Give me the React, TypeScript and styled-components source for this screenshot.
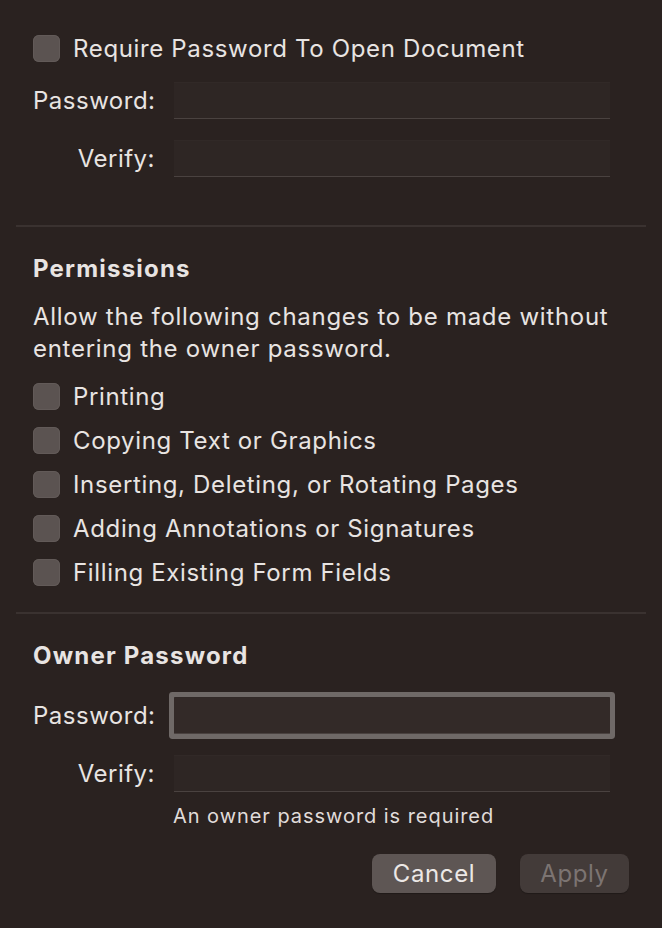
import React from "react";
import styled, { createGlobalStyle } from "styled-components";

const Global = createGlobalStyle`
  html, body { margin: 0; padding: 0; background: #2a2220; }
  body { font-family: Inter, "Noto Sans", sans-serif; color: #e8e4e2; }
  * { box-sizing: border-box; }
`;

const Panel = styled.div`
  width: 662px;
  height: 928px;
  background: #2a2220;
  padding: 0 16px;
  display: flex;
  flex-direction: column;
`;

const Section = styled.div<{ $pt: number; $pb: number }>`
  padding: ${(p) => p.$pt}px 17px ${(p) => p.$pb}px 17px;
  display: flex;
  flex-direction: column;
`;

const Divider = styled.div`
  height: 2px;
  background: #3a3230;
`;

const CheckList = styled.div`
  margin-top: 9px;
  display: flex;
  flex-direction: column;
`;

const CheckRow = styled.label`
  display: flex;
  align-items: center;
  gap: 13px;
  height: 44px;
  font-size: 24px;
  letter-spacing: 0.65px;
  color: #e8e4e2;
`;

const Box = styled.span`
  width: 27px;
  height: 27px;
  border-radius: 6px;
  background: #5b5351;
  box-shadow: inset 0 0 0 1px #625a58;
  flex-shrink: 0;
`;

const FieldRow = styled.div<{ $mt: number }>`
  display: flex;
  align-items: center;
  margin-top: ${(p) => p.$mt}px;
`;

const FieldLabel = styled.span`
  width: 122px;
  text-align: right;
  font-size: 24px;
  letter-spacing: 0.5px;
  color: #e8e4e2;
  margin-right: 19px;
  white-space: nowrap;
`;

const Input = styled.div<{ $focused?: boolean }>`
  width: 436px;
  height: 37px;
  background: ${(p) => (p.$focused ? "#332a28" : "#2e2624")};
  border-bottom: 1px solid #4a4240;
  border-top: 1px solid #312927;
  ${(p) =>
    p.$focused
      ? `box-shadow: 0 0 0 5px #6f6967; border-radius: 1px;`
      : ""}
`;

const Heading = styled.div`
  font-size: 24px;
  font-weight: 700;
  letter-spacing: 1.2px;
  color: #e8e4e2;
`;

const Para = styled.p`
  margin: 18px 0 0;
  font-size: 24px;
  line-height: 32px;
  letter-spacing: 0.72px;
  color: #e8e4e2;
`;

const Hint = styled.div`
  margin: 12px 0 0 140px;
  font-size: 20px;
  letter-spacing: 0.95px;
  color: #e0dcda;
`;

const ButtonRow = styled.div`
  display: flex;
  justify-content: flex-end;
  gap: 24px;
  margin-top: 26px;
`;

const Button = styled.button<{ $disabled?: boolean; $w: number }>`
  width: ${(p) => p.$w}px;
  height: 39px;
  border: none;
  border-radius: 8px;
  font-family: inherit;
  font-size: 24px;
  letter-spacing: 0.6px;
  background: ${(p) => (p.$disabled ? "#433b39" : "#5e5654")};
  color: ${(p) => (p.$disabled ? "#7c7472" : "#ece8e6")};
  box-shadow: 0 1px 1px rgba(0, 0, 0, 0.25);
`;

const perms = [
  "Printing",
  "Copying Text or Graphics",
  "Inserting, Deleting, or Rotating Pages",
  "Adding Annotations or Signatures",
  "Filling Existing Form Fields",
];

export default function App() {
  return (
    <>
      <Global />
      <Panel>
        <Section $pt={26} $pb={48}>
          <CheckRow>
            <Box />
            Require Password To Open Document
          </CheckRow>
          <FieldRow $mt={12}>
            <FieldLabel>Password:</FieldLabel>
            <Input />
          </FieldRow>
          <FieldRow $mt={21}>
            <FieldLabel>Verify:</FieldLabel>
            <Input />
          </FieldRow>
        </Section>
        <Divider />
        <Section $pt={27} $pb={18}>
          <Heading>Permissions</Heading>
          <Para>
            Allow the following changes to be made without entering the owner
            password.
          </Para>
          <CheckList>
            {perms.map((p) => (
              <CheckRow key={p}>
                <Box />
                {p}
              </CheckRow>
            ))}
          </CheckList>
        </Section>
        <Divider />
        <Section $pt={27} $pb={0}>
          <Heading>Owner Password</Heading>
          <FieldRow $mt={27}>
            <FieldLabel>Password:</FieldLabel>
            <Input $focused />
          </FieldRow>
          <FieldRow $mt={21}>
            <FieldLabel>Verify:</FieldLabel>
            <Input />
          </FieldRow>
          <Hint>An owner password is required</Hint>
          <ButtonRow>
            <Button $w={124}>Cancel</Button>
            <Button $w={109} $disabled>
              Apply
            </Button>
          </ButtonRow>
        </Section>
      </Panel>
    </>
  );
}
